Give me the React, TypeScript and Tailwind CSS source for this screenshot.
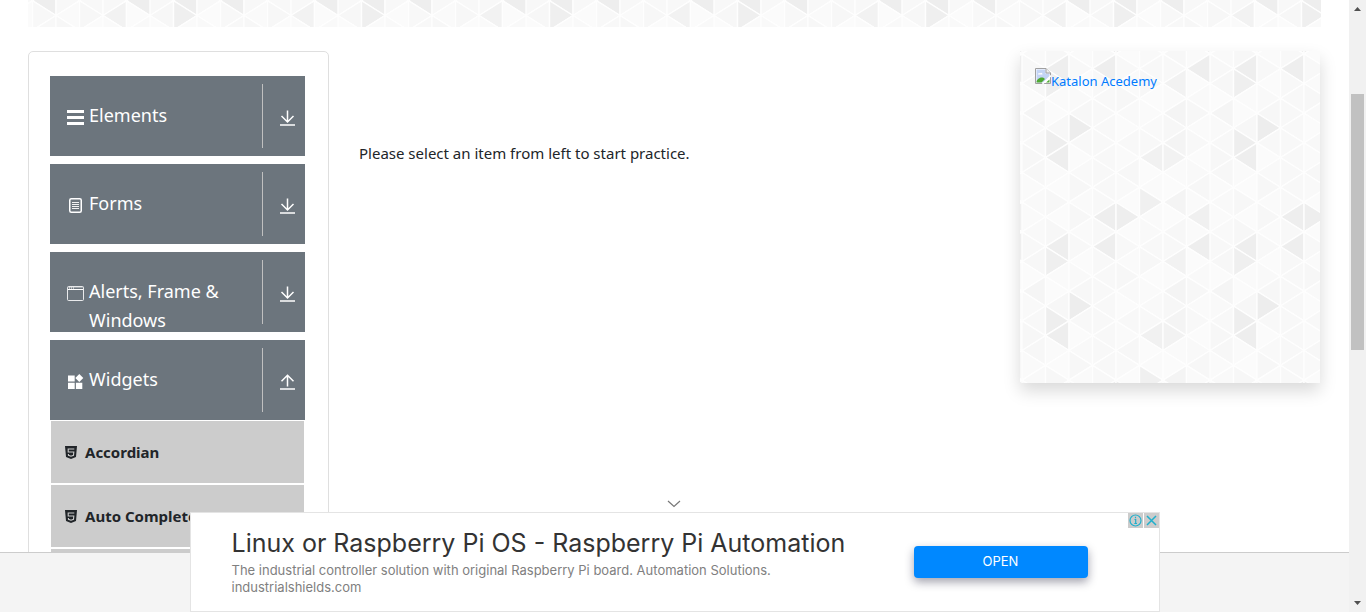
import React, { useId } from 'react';

const DARK: Record<string, string> = {
  '3-0': '#eee', '4-0': '#eee', '7-0': '#f0f0f0',
  '1-2': '#eee', '3-2': '#eee', '7-2': '#eee',
  '1-3': '#efefef', '6-3': '#f2f2f2',
  '0-5': '#f5f5f5', '6-5': '#f4f4f4',
  '2-6': '#ededed', '1-7': '#eee', '6-7': '#f4f4f4',
  '1-8': '#eee', '5-8': '#f1f1f1', '6-8': '#f2f2f2',
  '0-9': '#f7f7f7', '5-11': '#f0f0f0', '6-11': '#f4f4f4',
};
const LIGHT = ['#fafafa', '#f7f7f7', '#f9f9f9', '#fbfbfb', '#f8f8f8'];
const W = 23.5;
const H = 178 / 12;

function Triangles({ ox, oy }: { ox: number; oy: number }) {
  const id = useId();
  const shapes: React.ReactNode[] = [];
  for (let s = 0; s < 8; s++) {
    for (let m = -1; m <= 12; m++) {
      const mm = (m + 12) % 12;
      const apexLeft = (mm % 2 === 0) === (s % 2 === 1);
      const a = apexLeft ? s * W : (s + 1) * W;
      const b = apexLeft ? (s + 1) * W : s * W;
      shapes.push(
        <path key={`${s}-${m}`} d={`M${a} ${m * H}L${b} ${(m - 1) * H}V${(m + 1) * H}Z`}
          fill={DARK[`${s}-${mm}`] ?? LIGHT[(s * 3 + mm * 2 + s * mm) % 5]} stroke="#fefefe" strokeWidth="1.4" />,
      );
    }
  }
  return (
    <svg className="absolute inset-0 -z-10 h-full w-full" aria-hidden="true">
      <defs>
        <pattern id={id} x={ox} y={oy} width={188} height={178} patternUnits="userSpaceOnUse">{shapes}</pattern>
      </defs>
      <rect width="100%" height="100%" fill={`url(#${id})`} />
    </svg>
  );
}

function ListIcon() {
  return <svg viewBox="0 0 17 15" className="h-[15px] w-[17px]" fill="#fff"><path d="M0 0h17v3H0zM0 6h17v3H0zM0 12h17v3H0z" /></svg>;
}
function FormIcon() {
  return (
    <svg viewBox="0 0 13 15" className="h-[15px] w-[17px]" fill="none" stroke="#fff">
      <rect x=".75" y=".75" width="11.5" height="13.5" rx="1.5" strokeWidth="1.5" /><path d="M3 4.5h7M3 6.5h7M3 8.5h7M3 10.5h7" strokeWidth=".9" />
    </svg>
  );
}
function WindowIcon() {
  return (
    <svg viewBox="0 0 17 15" className="h-[15px] w-[17px]" fill="none" stroke="#fff">
      <rect x=".5" y=".5" width="16" height="14" rx="1" strokeOpacity=".85" /><path d="M1 1.500h15" strokeOpacity=".35" /><path d="M1 3.500h15M2 2h1M4 2h1M6 2h1" />
    </svg>
  );
}
function WidgetIcon() {
  return <svg viewBox="0 0 17 16" className="h-4 w-[17px]" fill="#fff"><path d="M1 1.500h6.700v6H1zM1 8.700h6.700v6.300H1zM8.900 8.700h6.400v6.300H8.900zM12.300 0l4 4-4 4-4-4z" /></svg>;
}
function ArrowIcon({ up }: { up?: boolean }) {
  return (
    <svg viewBox="0 0 15 16" className="h-4 w-[15px]" fill="none" stroke="#fff" strokeWidth="1.5">
      <path d={up ? 'M7.5 12.5V1.500M1.500 7.300l6-6 6 6' : 'M7.500 .5V11.800M1.500 6l6 6 6-6'} /><path d="M0 15h15" />
    </svg>
  );
}
function Html5Icon() {
  return (
    <svg viewBox="0 0 12 13" className="h-[13px] w-3 shrink-0">
      <path d="M0 0h12l-1 11L6 13l-5-2z" fill="#212529" />
      <path d="M9.300 3H3.200v3H8.800l-.3 3.300L6 10.200l-2.500-.9-.1-1.300" fill="none" stroke="#ccc" strokeWidth="1.100" />
    </svg>
  );
}
function BrokenImageIcon() {
  return (
    <svg viewBox="0 0 16 16" className="mt-px h-4 w-4 shrink-0" aria-hidden="true">
      <path d="M.5 .5h10.500l4.500 4.500v10.500H.5z" fill="#fff" stroke="#a0a0a0" />
      <path d="M1.500 1.500h9v4H14.500V9l-5.500 5.500H1.500z" fill="#c3d4f5" />
      <path d="M3 6.500c0-1.500 1.500-2 2-1 1-1.500 2.500-.5 2.500 1z" fill="#fff" />
      <path d="M1.500 14.500c0-3 3-5.500 6-5 1.500.3 2 1.500 2.500 1.500l-3.500 3.500zM11 14.500l3.500-3V14.500z" fill="#4ea831" />
      <path d="M11 .5V5h4.500" fill="#eee" stroke="#a0a0a0" />
      <path d="M16 7.500L7.500 16" stroke="#fff" strokeWidth="1.500" />
    </svg>
  );
}

function Group({ icon, label, open }: { icon: React.ReactNode; label: string; open?: boolean }) {
  return (
    <button aria-expanded={!!open} className="flex h-20 w-full items-start overflow-hidden bg-[#6c757d] pt-2 text-left text-white">
      <span className="flex min-w-0 flex-1 items-start gap-[5px] pt-[17px] pl-[17px] text-[18px] leading-[29px]">
        <span className="flex h-[33px] shrink-0 items-center">{icon}</span>
        <span>{label}</span>
      </span>
      <span className="flex h-16 w-[43px] shrink-0 items-center justify-center border-l border-[#c0c0c0] pt-1 pl-[6px]">
        <ArrowIcon up={open} />
      </span>
    </button>
  );
}

function AdBanner() {
  return (
    <section aria-label="Advertisement" className="absolute bottom-0 left-1/2 w-[970px] -translate-x-1/2 font-['Inter',sans-serif]">
      <button aria-label="Collapse" className="absolute bottom-full left-1/2 flex h-4 w-[42px] -translate-x-1/2 items-center justify-start pl-[13px]">
        <svg viewBox="0 0 14 8" className="h-2 w-[14px]" fill="none" stroke="#777" strokeWidth="1.200"><path d="M1 1l6 5.500L13 1" /></svg>
      </button>
      <div className="flex h-[100px] items-start border border-[#e4e4e4] bg-white pl-[41px]">
        <div className="w-[682px] pt-3 whitespace-nowrap">
          <h2 className="text-[25px] leading-9 text-[#333]">Linux or Raspberry Pi OS - Raspberry Pi Automation</h2>
          <p className="pt-px text-[13px] leading-[17px] text-[#808080]">The industrial controller solution with original Raspberry Pi board. Automation Solutions.<br />industrialshields.com</p>
        </div>
        <button className="mt-[33px] h-8 w-[174px] rounded bg-[#08f] text-[13px] text-white shadow-[0_4px_10px_rgba(20,20,50,0.4)]">OPEN</button>
        <div className="ml-auto flex gap-px">
          <button aria-label="Ad information" className="flex h-[15px] w-[15px] items-center justify-center bg-[#ccc]">
            <svg viewBox="0 0 13 13" className="h-[13px] w-[13px]" fill="none" stroke="#1fb0cc" strokeWidth="1.200"><circle cx="6.500" cy="6.500" r="5.500" /><path d="M5.500 5.500h1.200v4M5.300 9.500h2.700M6.500 2.800v1.400" /></svg>
          </button>
          <button aria-label="Close ad" className="flex h-[15px] w-[15px] items-center justify-center bg-[#ccc]">
            <svg viewBox="0 0 11 11" className="h-[11px] w-[11px]" fill="none" stroke="#1fb0cc" strokeWidth="1.500"><path d="M1 1l9 9M10 1l-9 9" /></svg>
          </button>
        </div>
      </div>
    </section>
  );
}

function ScrollBar() {
  return (
    <div className="flex w-[17px] shrink-0 flex-col items-center bg-[#f1f1f1]" aria-hidden="true">
      <svg viewBox="0 0 7 4" className="mt-[7px] h-1 w-[7px]" fill="#505050"><path d="M3.500 0L7 4H0z" /></svg>
      <div className="mt-[83px] h-64 w-[13px] bg-[#c1c1c1]" />
      <svg viewBox="0 0 7 4" className="mt-auto mb-[7px] h-1 w-[7px]" fill="#505050"><path d="M0 0h7L3.500 4z" /></svg>
    </div>
  );
}

export default function App() {
  return (
    <div className="flex h-screen overflow-hidden bg-white font-['Noto_Sans','Open_Sans',sans-serif] text-[#212529]">
      <div className="relative flex min-w-0 flex-1 flex-col overflow-hidden">
        <div className="flex min-h-0 flex-1 flex-col px-7">
          <div className="relative isolate h-[27px] shrink-0"><Triangles ox={122} oy={-29} /></div>
          <div className="mt-6 flex min-h-0 flex-1 items-start">
            <nav className="w-[301px] shrink-0 rounded-t-[5px] border border-[#dfdfdf] pt-6 pr-[23px] pl-[21px]">
              <div className="flex flex-col gap-2">
                <Group icon={<ListIcon />} label="Elements" />
                <Group icon={<FormIcon />} label="Forms" />
                <Group icon={<WindowIcon />} label="Alerts, Frame & Windows" />
                <Group icon={<WidgetIcon />} label="Widgets" open />
              </div>
              <ul className="flex flex-col gap-[2px] px-px pt-px">
                {['Accordian', 'Auto Complete', 'Date Picker'].map((t) => (
                  <li key={t} className="flex h-[62px] items-center gap-2 bg-[#ccc] pl-[14px] text-[15px] font-bold"><Html5Icon />{t}</li>
                ))}
              </ul>
            </nav>
            <main className="flex-1 pt-[90px] pl-[30px] text-[15px] leading-6">Please select an item from left to start practice.</main>
            <aside className="relative isolate mr-[1px] h-[332px] w-[300px] shrink-0 px-[15px] pt-4 shadow-[0_8px_16px_rgba(0,0,0,0.15)]">
              <Triangles ox={2} oy={-12} />
              <a href="#" className="flex items-start text-[13px] leading-7 text-[#007bff]"><BrokenImageIcon />Katalon Acedemy</a>
            </aside>
          </div>
        </div>
        <footer className="h-[60px] shrink-0 border-t border-[#ccc] bg-[#f4f4f4]" />
        <AdBanner />
      </div>
      <ScrollBar />
    </div>
  );
}
